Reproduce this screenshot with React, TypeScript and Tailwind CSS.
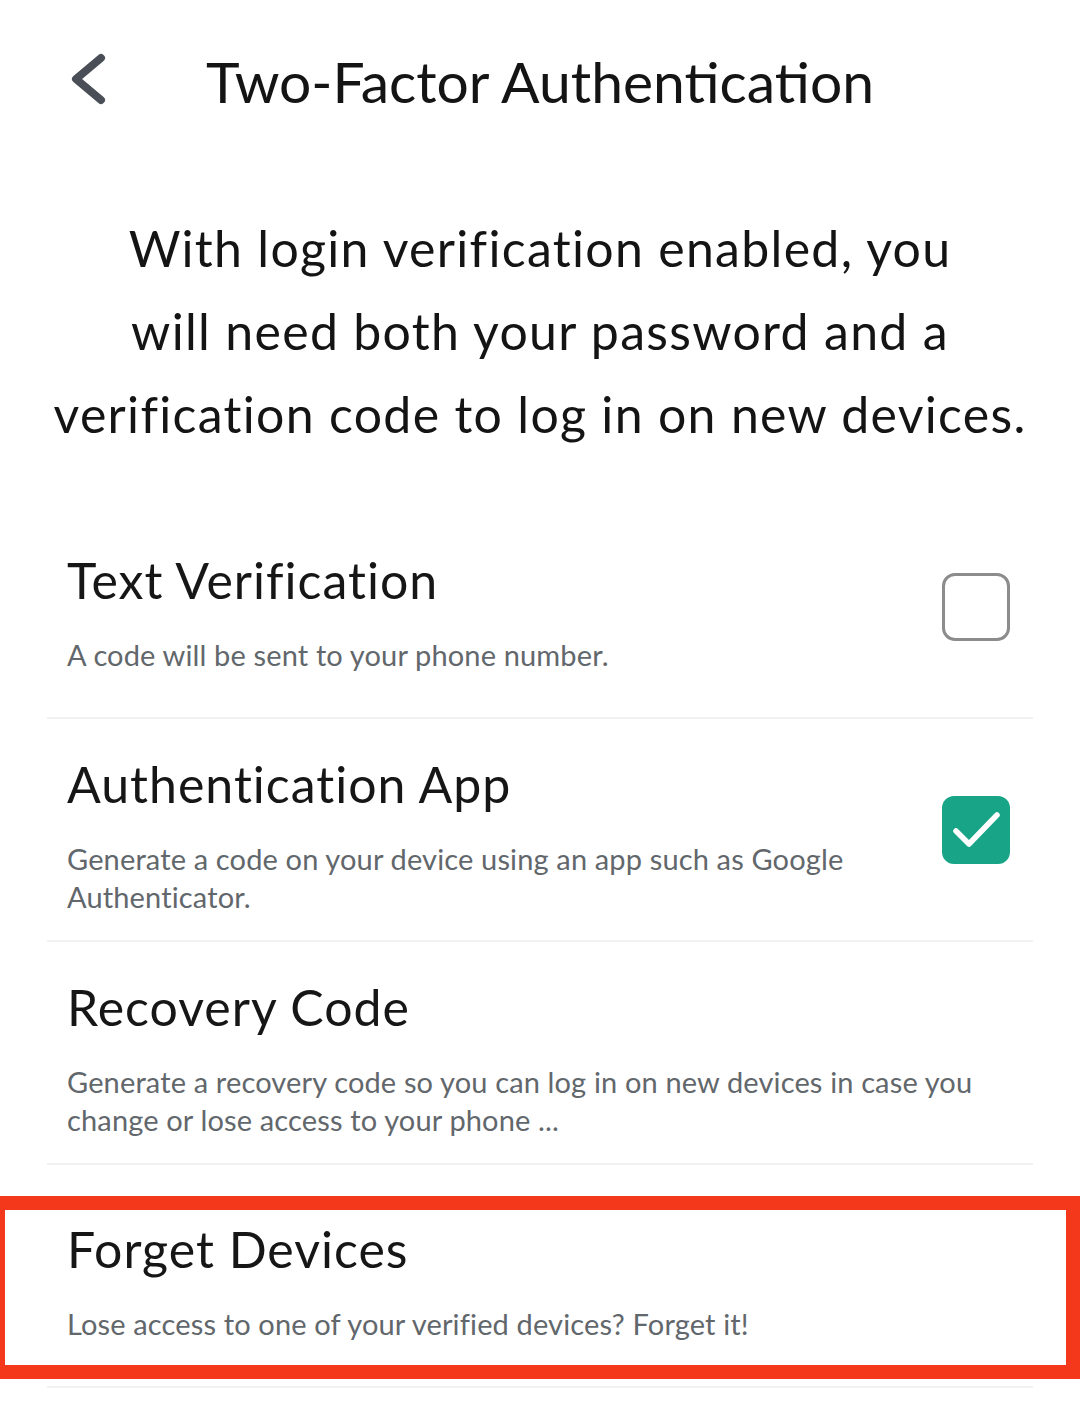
import { ReactNode } from "react";

const font = { fontFamily: "Lato, 'Noto Sans', sans-serif" };

function Checkbox({ checked }: { checked: boolean }) {
  if (checked) {
    return (
      <div className="w-[68px] h-[68px] rounded-[12px] bg-[#17a487] flex items-center justify-center shrink-0">
        <svg width="68" height="68" viewBox="0 0 68 68" fill="none">
          <path d="M14 35 L27 48 L55 19" stroke="white" strokeWidth="5.5" strokeLinecap="round" strokeLinejoin="round" />
        </svg>
      </div>
    );
  }
  return <div className="w-[68px] h-[68px] rounded-[13px] border-[3px] border-[#8c8c8c] shrink-0" />;
}

interface OptionRowProps {
  title: string;
  children: ReactNode;
  checked?: boolean;
  highlight?: boolean;
}

function OptionRow({ title, children, checked, highlight }: OptionRowProps) {
  return (
    <div className="relative min-h-[223px] pl-[20px] pr-[23px] flex items-center justify-between border-b-2 border-[#f1f1f1]">
      <div className="flex flex-col gap-[26px] pt-[10px]">
        <div className="text-[50px] leading-[60px] tracking-[0.02em] text-[#161616]">{title}</div>
        <div className="text-[29px] leading-[38px] tracking-[0.005em] text-[#62676c]">{children}</div>
      </div>
      {checked !== undefined && <Checkbox checked={checked} />}
      {highlight && (
        <div className="pointer-events-none absolute left-[-56px] right-[-47px] top-[31px] h-[183px] border-[14px] border-[#f4381c]" />
      )}
    </div>
  );
}

export default function App() {
  return (
    <div className="w-[1080px] min-h-[1407px] bg-white overflow-hidden" style={font}>
      <div className="grid grid-cols-[1fr_auto_1fr] items-center pt-[46px] h-[116px]">
        <div className="pl-[68px] flex items-center">
          <svg width="44" height="56" viewBox="0 0 44 56" fill="none">
            <path d="M33 5 L8 26 L33 47" stroke="#4a4f57" strokeWidth="8" strokeLinecap="round" strokeLinejoin="round" />
          </svg>
        </div>
        <h1 className="text-[57px] leading-[70px] text-[#141414]">Two-Factor Authentication</h1>
        <div />
      </div>

      <p className="mt-[91px] text-center text-[50px] leading-[83px] tracking-[0.026em] text-[#141414]">
        With login verification enabled, you
        <br />
        will need both your password and a
        <br />
        verification code to log in on new devices.
      </p>

      <div className="mt-[40px] mx-[47px]">
        <OptionRow title="Text Verification" checked={false}>
          A code will be sent to your phone number.
        </OptionRow>
        <OptionRow title="Authentication App" checked={true}>
          Generate a code on your device using an app such as Google
          <br />
          Authenticator.
        </OptionRow>
        <OptionRow title="Recovery Code">
          Generate a recovery code so you can log in on new devices in case you
          <br />
          change or lose access to your phone ...
        </OptionRow>
        <OptionRow title="Forget Devices" highlight>
          Lose access to one of your verified devices? Forget it!
        </OptionRow>
      </div>
    </div>
  );
}
